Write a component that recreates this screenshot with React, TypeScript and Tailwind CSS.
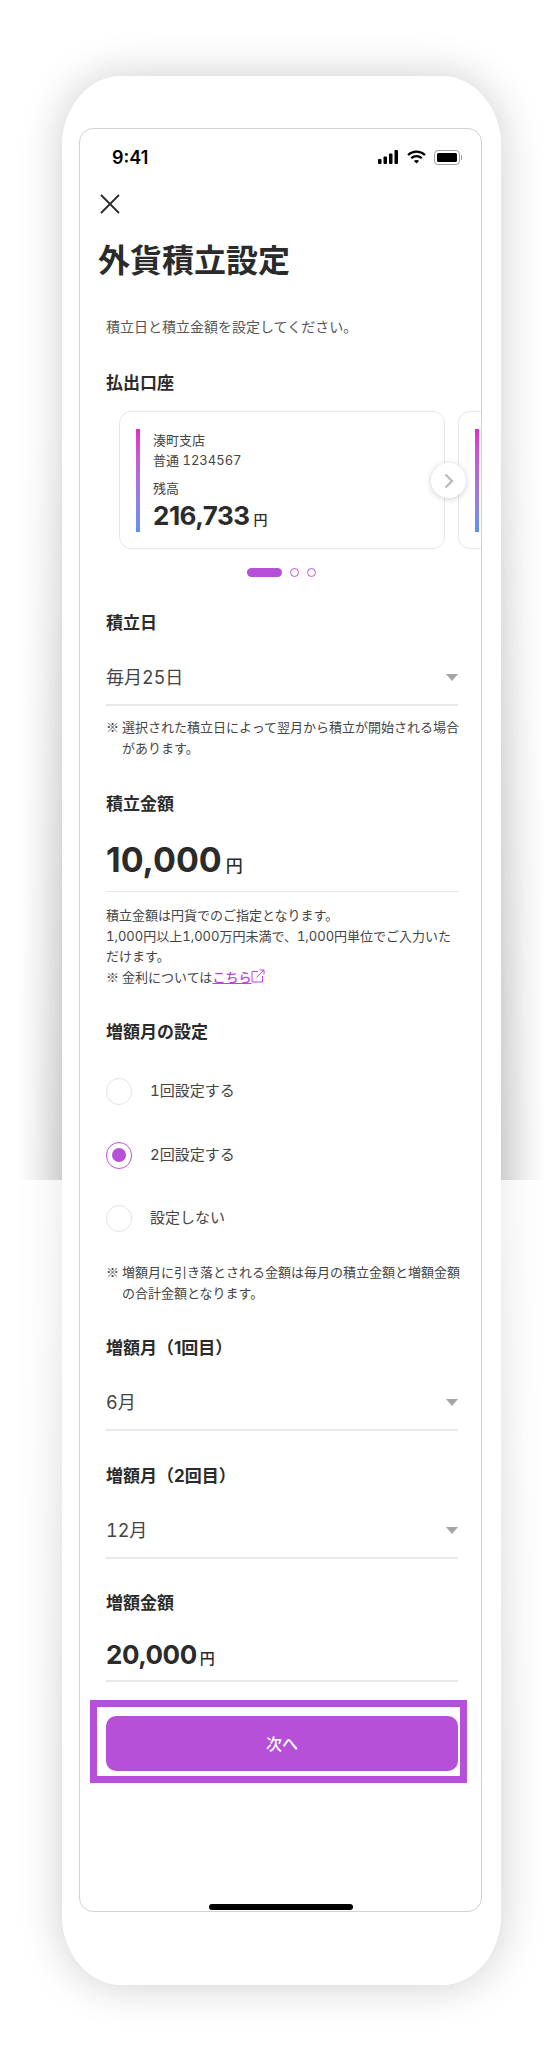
import React from 'react';

const FONT = "font-['Inter','Noto_Sans_CJK_JP',sans-serif]";

const Heading = ({ children, className = '' }: { children: React.ReactNode; className?: string }) => (
  <h2 className={`text-[17px] leading-[24px] font-bold text-[#2b2b2b] ${className}`}>{children}</h2>
);

const Select = ({ value }: { value: string }) => (
  <div className="flex items-center justify-between border-b-2 border-[#e8e8e8] h-[52px] pb-[3px]">
    <span className="text-[18px] text-[#444] tabular-nums">{value}</span>
    <span className="w-0 h-0 border-x-[6.5px] border-x-transparent border-t-[7px] border-t-[#a5a5a5]" />
  </div>
);

const Mark = () => <span className="font-['Noto_Sans_CJK_JP',sans-serif] mr-[3px]">※</span>;

const Note = ({ children }: { children: React.ReactNode }) => (
  <p className="pl-[16px] -indent-[16px] -mr-[4px] text-[13px] leading-[20.5px] text-[#444]">
    <Mark />{children}
  </p>
);

const Radio = ({ label, checked = false }: { label: string; checked?: boolean }) => (
  <div className="flex items-center h-[27px] gap-[18px]">
    {checked ? (
      <span className="w-[26px] h-[27px] rounded-full border border-[#c050e0] flex items-center justify-center">
        <span className="w-[14px] h-[14px] rounded-full bg-[#b650d8]" />
      </span>
    ) : (
      <span className="w-[26px] h-[27px] rounded-full border border-[#e4e4e4]" />
    )}
    <span className="text-[15px] text-[#444] tabular-nums">{label}</span>
  </div>
);

const CardBar = () => <div className="shrink-0 w-[4px] h-[103px] bg-gradient-to-b from-[#e22cc6] to-[#5a92f2]" />;

const AccountCard = () => (
  <div className="shrink-0 w-[326px] h-[138px] rounded-[12px] border-[1.5px] border-[#e8e8e8] bg-white pl-[16px] flex items-center">
    <CardBar />
    <div className="pl-[13px] pt-[1px] text-[#444]">
      <p className="text-[13px] leading-[20px]">湊町支店</p>
      <p className="text-[13px] leading-[20px] tabular-nums">普通 1234567</p>
      <p className="text-[13px] leading-[20px] mt-[8px]">残高</p>
      <p className="flex items-baseline text-[#2b2b2b] mt-[2px]">
        <span className="text-[26px] leading-[32px] font-bold tracking-[-0.5px]">216,733</span>
        <span className="text-[14px] ml-[4px] font-medium">円</span>
      </p>
    </div>
  </div>
);

const App: React.FC = () => {
  return (
    <div className={`relative w-[560px] h-[2056px] bg-white overflow-hidden pt-[76px] pl-[62px] ${FONT}`}>
      {/* Phone shadow: darker on the upper half, cut off at y=1180 */}
      <div className="absolute left-[62px] top-[76px] w-[439px] h-[1909px] rounded-[60px/70px] shadow-[0_0_44px_rgba(0,0,0,0.2)]" />
      <div className="absolute left-[18px] w-[44px] top-[420px] h-[760px] bg-gradient-to-l from-black/10 to-transparent [mask-image:linear-gradient(to_bottom,transparent,black)]" />
      <div className="absolute left-[501px] w-[44px] top-[420px] h-[760px] bg-gradient-to-r from-black/10 to-transparent [mask-image:linear-gradient(to_bottom,transparent,black)]" />
      <div className="absolute left-[10px] w-[52px] top-[1180px] h-[620px] bg-white/50 [mask-image:linear-gradient(to_bottom,black,transparent)]" />
      <div className="absolute left-[501px] w-[52px] top-[1180px] h-[620px] bg-white/50 [mask-image:linear-gradient(to_bottom,black,transparent)]" />

      {/* Phone */}
      <div className="relative w-[439px] h-[1909px] bg-white rounded-[60px/70px] pt-[52px] pl-[17px]">
        <div className="relative w-[403px] h-[1784px] rounded-[14px] border border-[#d2d2d2] overflow-hidden">
          {/* Status bar */}
          <div className="flex items-center justify-between h-[56px] pl-[32px] pr-[19px]">
            <span className="text-[18px] font-semibold text-black">9:41</span>
            <div className="flex items-center gap-[8px]">
              <svg width="21" height="14" viewBox="0 0 21 14" fill="#000">
                <rect x="0" y="9" width="3.5" height="5" rx="1" />
                <rect x="5.5" y="6.5" width="3.5" height="7.5" rx="1" />
                <rect x="11" y="3.5" width="3.5" height="10.5" rx="1" />
                <rect x="16.5" y="0" width="3.5" height="14" rx="1" />
              </svg>
              <svg width="19" height="14" viewBox="0 0 19 14" fill="none" stroke="#000" strokeWidth="2.2">
                <path d="M1 5 C6 0.5 13 0.5 18 5" />
                <path d="M4.2 8.2 C7.5 5.5 11.5 5.5 14.8 8.2" />
                <path d="M9.5 13.5 L6.8 10.8 C8.5 9.6 10.5 9.6 12.2 10.8 Z" fill="#000" stroke="none" />
              </svg>
              <div className="flex items-center">
                <div className="w-[26px] h-[15px] rounded-[4px] border border-[#a0a0a0] p-[2px]">
                  <div className="w-full h-full bg-black rounded-[1.5px]" />
                </div>
                <div className="w-[1.5px] h-[5px] bg-[#a0a0a0] ml-[1px]" />
              </div>
            </div>
          </div>

          {/* Close */}
          <div className="pl-[20px] pt-[9px]">
            <svg width="20" height="20" viewBox="0 0 20 20" fill="none" stroke="#2b2b2b" strokeWidth="1.8">
              <path d="M1 1 L19 19 M19 1 L1 19" />
            </svg>
          </div>

          <h1 className="pl-[18px] mt-[27px] text-[32px] leading-[40px] font-bold text-[#2b2b2b]">外貨積立設定</h1>

          <div className="pl-[26px] pr-[23px]">
            <p className="mt-[36px] text-[14px] leading-[20px] text-[#555]">積立日と積立金額を設定してください。</p>
            <Heading className="mt-[34px]">払出口座</Heading>
          </div>

          {/* Account carousel */}
          <div className="relative mt-[16px]">
            <div className="flex gap-[13px] pl-[39px] overflow-hidden">
              <AccountCard />
              <div className="shrink-0 w-[326px] h-[138px] rounded-[12px] border-[1.5px] border-[#e8e8e8] bg-white pl-[16px] flex items-center">
                <CardBar />
              </div>
            </div>
            <div className="absolute left-[351px] top-[52px] w-[35px] h-[35px] rounded-full bg-white shadow-[0_1px_6px_rgba(0,0,0,0.2)] flex items-center justify-center">
              <svg width="10" height="16" viewBox="0 0 10 16" fill="none" stroke="#b9b9b9" strokeWidth="2.2">
                <path d="M1.5 1.5 L8 8 L1.5 14.5" />
              </svg>
            </div>
          </div>
          <div className="flex items-center justify-center gap-[8px] mt-[19px] pl-[2px]">
            <span className="w-[35px] h-[9px] rounded-full bg-[#b650d8]" />
            <span className="w-[9px] h-[9px] rounded-full border-[1.5px] border-[#c050e0]" />
            <span className="w-[9px] h-[9px] rounded-full border-[1.5px] border-[#c050e0]" />
          </div>

          <div className="pl-[26px] pr-[23px]">
            <Heading className="mt-[34px]">積立日</Heading>
            <div className="mt-[19px]"><Select value="毎月25日" /></div>
            <div className="mt-[11px]">
              <Note>選択された積立日によって翌月から積立が開始される場合があります。</Note>
            </div>

            <Heading className="mt-[34px]">積立金額</Heading>
            <div className="flex items-baseline mt-[18px] h-[58px] border-b-[1.5px] border-[#e4e4e4]">
              <span className="text-[34px] leading-[52px] font-bold text-[#2b2b2b]">10,000</span>
              <span className="text-[17px] font-medium ml-[4px] text-[#2b2b2b]">円</span>
            </div>
            <p className="mt-[13px] text-[13px] leading-[20.5px] text-[#444] tabular-nums">
              積立金額は円貨でのご指定となります。<br />
              1,000円以上1,000万円未満で、1,000円単位でご入力いた<br />
              だけます。<br />
              <Mark />金利については
              <a className="text-[#c040e0] underline font-medium">
                こちら
                <svg className="inline-block align-[-1px]" width="14" height="14" viewBox="0 0 14 14" fill="none" stroke="#c040e0" strokeWidth="1">
                  <path d="M7 2.5 H1 V13 H11.5 V7" />
                  <path d="M5.5 8.5 L13 1 M8.5 1 H13 V5.5" />
                </svg>
              </a>
            </p>

            <Heading className="mt-[33px]">増額月の設定</Heading>
            <div className="mt-[34px] flex flex-col gap-[36.5px]">
              <Radio label="1回設定する" />
              <Radio label="2回設定する" checked />
              <Radio label="設定しない" />
            </div>
            <div className="mt-[30px]">
              <Note>増額月に引き落とされる金額は毎月の積立金額と増額金額の合計金額となります。</Note>
            </div>

            <Heading className="mt-[33px]">増額月（1回目）</Heading>
            <div className="mt-[19px]"><Select value="6月" /></div>
            <Heading className="mt-[33px]">増額月（2回目）</Heading>
            <div className="mt-[19px]"><Select value="12月" /></div>

            <Heading className="mt-[32px]">増額金額</Heading>
            <div className="flex items-baseline mt-[21px] h-[46px] border-b-2 border-[#e8e8e8]">
              <span className="text-[26px] leading-[38px] font-bold tracking-[-0.5px] text-[#2b2b2b]">20,000</span>
              <span className="text-[15px] font-medium ml-[3px] text-[#2b2b2b]">円</span>
            </div>
          </div>

          {/* Next button, highlighted */}
          <div className="ml-[10px] mr-[14px] mt-[18px] border-[7px] border-[#b650d8] pl-[9px] pr-[2px] pt-[9px] pb-[5px]">
            <button className="w-full h-[55px] rounded-[10px] bg-[#b650d8] text-white text-[16px] font-medium">次へ</button>
          </div>

          {/* Home indicator */}
          <div className="absolute left-[129px] bottom-[1px] w-[144px] h-[6px] rounded-full bg-black" />
        </div>
      </div>
    </div>
  );
};

export default App;
